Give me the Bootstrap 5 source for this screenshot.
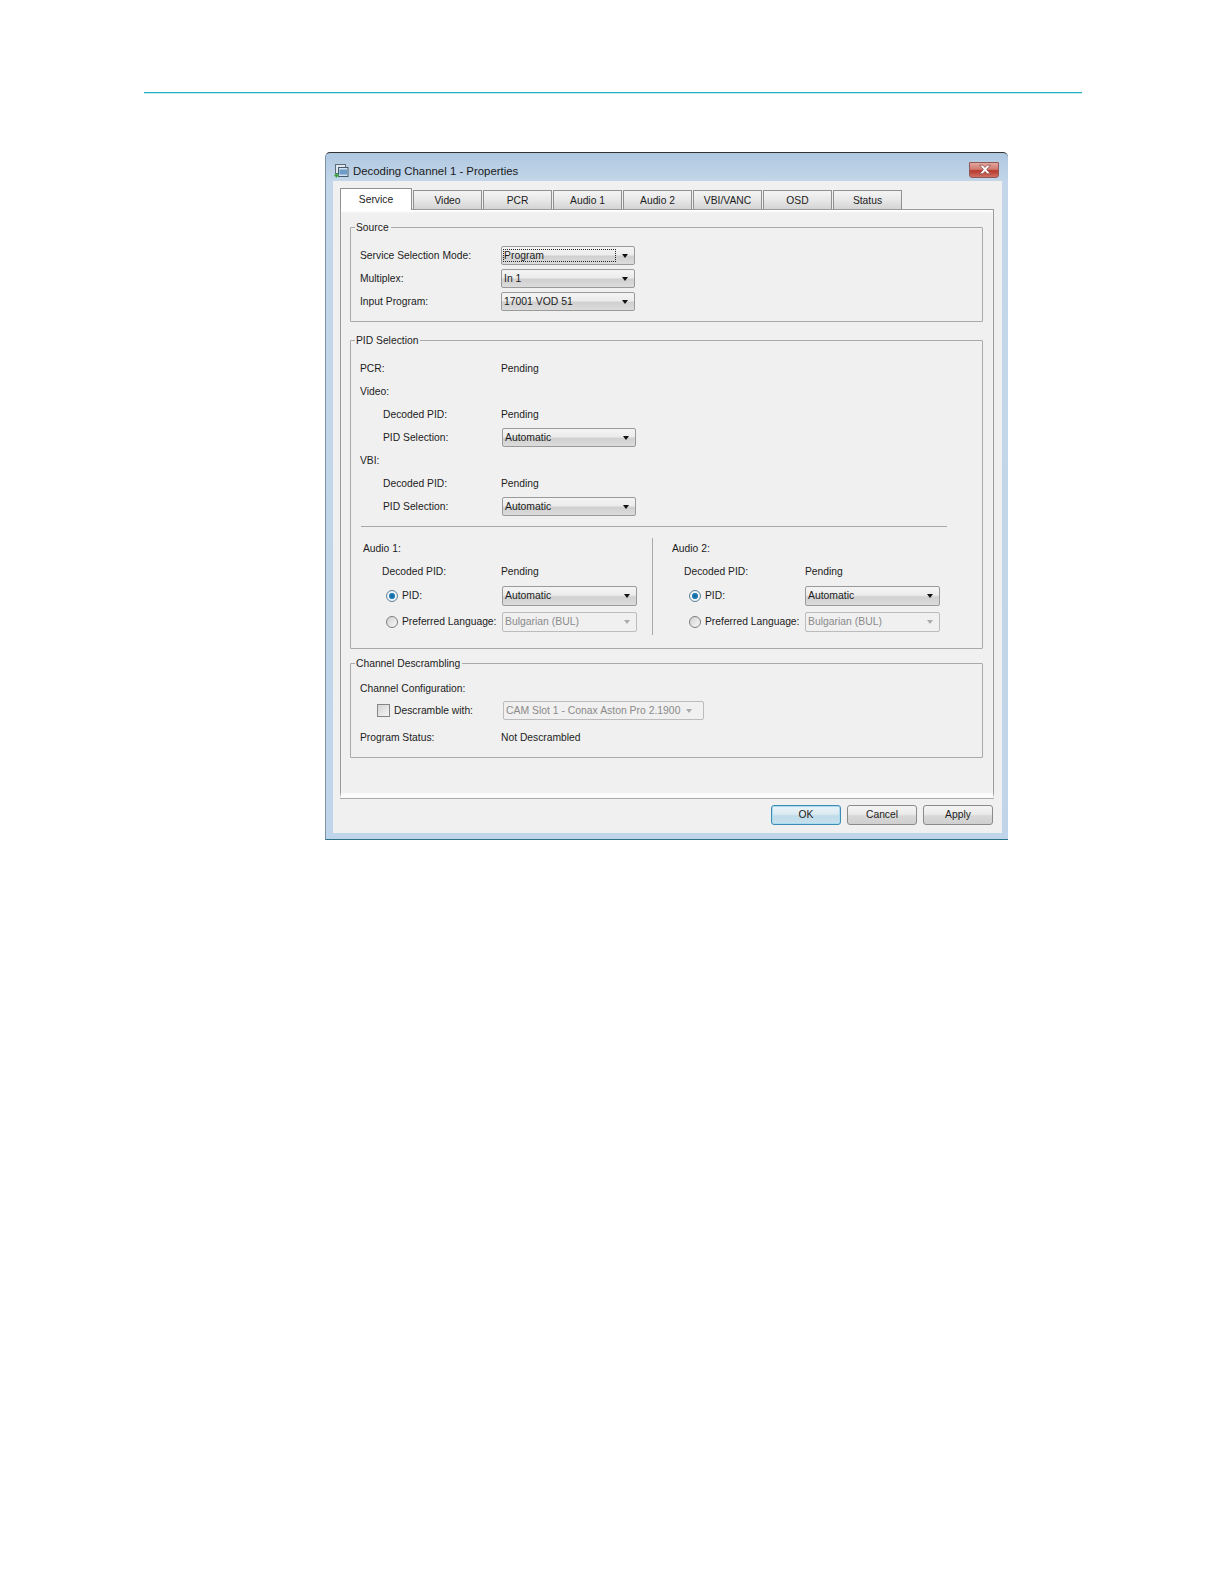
<!DOCTYPE html>
<html lang="en">
<head>
<meta charset="utf-8">
<title>Decoding Channel 1 - Properties</title>
<link href="https://cdn.jsdelivr.net/npm/bootstrap@5.3.0/dist/css/bootstrap.min.css" rel="stylesheet">
<style>
html,body{background:#fff;}
body{font-family:"Liberation Sans",sans-serif;font-size:10.3px;line-height:14px;color:#1c1c1c;min-height:1584px;}
.page-rule{margin:92px 142px 0 144px;height:1px;background:#22b0c0;box-shadow:0 1px 0 #c4ecf0;}
.dlg{margin:59px 0 0 325px;width:683px;height:688px;display:flex;flex-direction:column;padding:0 6px 6px 7px;border-radius:5px 5px 0 0;border-top:1px solid #333;border-left:1px solid #7b93a8;border-bottom:1px solid #2c7288;background:linear-gradient(180deg,#afc8e0 0,#c4d7ea 30px,#c0d5e9 100%);}
.dlg-title{height:28px;margin-left:-1px;padding-top:7px;font-size:11.4px;color:#1a1a1a;}
.dlg-title svg{margin-left:2px;}
.dlg-close{width:30px;height:16px;margin:0 3px 0 auto;position:relative;top:-1px;border:1px solid #8f5a55;border-radius:0 0 3px 3px;background:linear-gradient(180deg,#e2a59d 0,#d07b70 45%,#b8382c 55%,#cf7065 100%);}
.dlg-body{background:#f0f0f0;padding:7px 8px 8px 7px;}
.tabbar{border:0;flex-wrap:nowrap;align-items:flex-end;height:21px;}
.tabbar .nav-item{margin-right:1px;}
.tabbar .nav-link{width:69px;height:19px;padding:3px 0 0;font-size:10.3px;line-height:14px;text-align:center;color:#1c1c1c;border:1px solid #8f9090;border-bottom:0;border-radius:1px 1px 0 0;margin:0;background:linear-gradient(180deg,#f4f4f4 0,#e9e9e9 45%,#d4d4d4 100%);}
.tabbar .nav-link.active{width:72px;height:22px;margin-bottom:-1px;background:#fff;color:#1c1c1c;border-color:#8f9090;position:relative;z-index:1;padding-top:4px;}
.tabpanel{border:1px solid #9a9a9a;border-bottom:5px solid #fbfbfb;background:#f0f0f0;box-shadow:inset 0 2px 2px #fff;padding:10px 10px 0 9px;}
.grp{border:1px solid #a9a9a9;border-radius:1px;padding:0 9px;margin:0;min-width:0;}
.grp legend{float:none;width:auto;font-size:10.3px;line-height:14px;margin:0 0 -2px -5px;padding:2px 2px 0 1px;color:#1c1c1c;}
.grp-source legend{margin-bottom:-1px;padding-top:1px;}
.grp-source{margin-bottom:10px;padding-bottom:8px;}
.grp-source .ln-first{margin-top:10px;}
.grp-pid{margin-bottom:6px;padding-bottom:13px;}
.grp-pid .ln-first{margin-top:11px;}
.grp-chan{padding-bottom:8px;}
.grp-chan .ln-first{margin-top:8px;}
.ln{height:23px;}
.ln-tall{height:26px;}
.ln-mid{height:21px;margin-bottom:5px;}
.lbl{width:141px;flex:none;}
.lbl-in{width:118px;margin-left:23px;flex:none;}
.rule-h{height:1px;background:#a9a9a9;width:586px;margin:8px 0 10px 1px;}
.audio-cols{display:flex;}
.audio-a{width:293px;flex:none;border-right:1px solid #a9a9a9;padding-left:3px;margin-top:1px;}
.audio-a .ln-top{height:22px;padding-bottom:1px;}
.audio-b{flex:1;padding-left:19px;}
.w-dec{width:119px;flex:none;margin-left:19px;}
.w-dec-b{width:121px;flex:none;margin-left:12px;}
.radio-wrap{width:116px;flex:none;margin-left:23px;gap:4px;white-space:nowrap;}
.radio-wrap-b{margin-left:17px;}
.form-check-input.w7{width:12px;height:12px;margin:0;flex:none;background:linear-gradient(135deg,#d2d2d2,#f8f8f8);border:1px solid #7d7d7d;}
.form-check-input.w7:checked{background:radial-gradient(circle,#0f5f95 0,#2a86bf 40%,#f0f5f9 48%,#e9edf0 100%);border-color:#5f7f95;}
.chk-wrap{margin-left:17px;width:125px;flex:none;gap:4px;white-space:nowrap;}
.form-check-input.chk7{width:13px;height:13px;margin:0;border-radius:0;background:linear-gradient(135deg,#d4d4d4,#f5f5f5);border:1px solid #858585;flex:none;opacity:1;}
.cmb{width:134px;height:19px;flex:none;display:flex;align-items:center;justify-content:space-between;padding:0 6px 0 2px;border:1px solid #9a9a9a;border-radius:2px;background:linear-gradient(180deg,#f4f4f4 0,#ececec 45%,#d0d0d0 55%,#dcdcdc 100%);font-size:10.4px;color:#1c1c1c;}
.cmb-off{background:#f0f0f0;border-color:#bcbcbc;color:#8a8a8a;}
.cmb-aud{width:135px;height:20px;}
.cmb-wide{width:201px;margin-left:1px;padding-right:11px;}
.cmb-shift{margin-left:1px;}
.cmb-focus{width:113px;height:13px;margin-left:-1px;border:1px dotted #222;line-height:11px;}
.caret7{width:0;height:0;border-left:3.5px solid transparent;border-right:3.5px solid transparent;border-top:4px solid #111;}
.cmb-off .caret7{border-top-color:#aaa;}
.dlg-foot{border-top:1px solid #a9a9a9;padding:6px 1px 0 0;gap:6px;}
.btn.bt7{width:70px;height:20px;padding:0;font-size:10.3px;line-height:16px;color:#1c1c1c;border:1px solid #8a8a8a;border-radius:3px;background:linear-gradient(180deg,#f4f4f4 0,#ebebeb 45%,#d8d8d8 55%,#cfcfcf 100%);}
.btn.bt7-def{border-color:#3d8db3;background:linear-gradient(180deg,#e9f3f8 0,#dceaf2 45%,#bfdbe9 55%,#c8e0ec 100%);box-shadow:inset 0 0 0 1px #a9dcef;}
</style>
</head>
<body>
<div class="page-rule"></div>
<div class="dlg">
  <div class="dlg-title d-flex align-items-center gap-1">
    <svg width="15" height="15" viewBox="0 0 15 15" aria-hidden="true"><rect x="1.500" y="1.500" width="10" height="9" fill="#dfe8ef" stroke="#5b6b78"/><rect x="4.500" y="4.500" width="9.500" height="9" fill="#cfe0ee" stroke="#47586a"/><rect x="5.500" y="6.500" width="7.500" height="5" fill="#6d9cc9"/><path d="M0 12.500 3 10v1.500h2v2H3V15z" fill="#3aa53d"/></svg>
    <span>Decoding Channel 1 - Properties</span>
    <div class="dlg-close d-flex align-items-center justify-content-center"><svg width="14" height="11" viewBox="0 0 13 10" aria-hidden="true"><path d="M1.500 1h3l2 2.200L8.500 1h3L8 5l3.500 4h-3l-2-2.200L4.500 9h-3L5 5z" fill="#fff" stroke="#7a3a33" stroke-width=".6"/></svg></div>
  </div>
  <div class="dlg-body flex-grow-1 d-flex flex-column">
    <ul class="nav nav-tabs tabbar">
      <li class="nav-item"><a class="nav-link active" href="#">Service</a></li>
      <li class="nav-item"><a class="nav-link" href="#">Video</a></li>
      <li class="nav-item"><a class="nav-link" href="#">PCR</a></li>
      <li class="nav-item"><a class="nav-link" href="#">Audio 1</a></li>
      <li class="nav-item"><a class="nav-link" href="#">Audio 2</a></li>
      <li class="nav-item"><a class="nav-link" href="#">VBI/VANC</a></li>
      <li class="nav-item"><a class="nav-link" href="#">OSD</a></li>
      <li class="nav-item"><a class="nav-link" href="#">Status</a></li>
    </ul>
    <div class="tabpanel flex-grow-1">
      <fieldset class="grp grp-source">
        <legend>Source</legend>
        <div class="ln ln-first d-flex align-items-center"><span class="lbl">Service Selection Mode:</span><div class="cmb"><span class="cmb-focus">Program</span><i class="caret7"></i></div></div>
        <div class="ln d-flex align-items-center"><span class="lbl">Multiplex:</span><div class="cmb"><span>In 1</span><i class="caret7"></i></div></div>
        <div class="ln d-flex align-items-center"><span class="lbl">Input Program:</span><div class="cmb"><span>17001 VOD 51</span><i class="caret7"></i></div></div>
      </fieldset>
      <fieldset class="grp grp-pid">
        <legend>PID Selection</legend>
        <div class="ln ln-first d-flex align-items-center"><span class="lbl">PCR:</span><span>Pending</span></div>
        <div class="ln d-flex align-items-center"><span class="lbl">Video:</span></div>
        <div class="ln d-flex align-items-center"><span class="lbl-in">Decoded PID:</span><span>Pending</span></div>
        <div class="ln d-flex align-items-center"><span class="lbl-in">PID Selection:</span><div class="cmb cmb-shift"><span>Automatic</span><i class="caret7"></i></div></div>
        <div class="ln d-flex align-items-center"><span class="lbl">VBI:</span></div>
        <div class="ln d-flex align-items-center"><span class="lbl-in">Decoded PID:</span><span>Pending</span></div>
        <div class="ln d-flex align-items-center"><span class="lbl-in">PID Selection:</span><div class="cmb cmb-shift"><span>Automatic</span><i class="caret7"></i></div></div>
        <div class="rule-h"></div>
        <div class="audio-cols">
          <div class="audio-a">
            <div class="ln ln-top d-flex align-items-center">Audio 1:</div>
            <div class="ln d-flex align-items-center"><span class="w-dec">Decoded PID:</span><span>Pending</span></div>
            <div class="ln-tall d-flex align-items-center"><label class="radio-wrap d-flex align-items-center"><input class="form-check-input w7" type="radio" name="a1" checked>PID:</label><div class="cmb cmb-aud"><span>Automatic</span><i class="caret7"></i></div></div>
            <div class="ln-tall d-flex align-items-center"><label class="radio-wrap d-flex align-items-center"><input class="form-check-input w7" type="radio" name="a1">Preferred Language:</label><div class="cmb cmb-aud cmb-off"><span>Bulgarian (BUL)</span><i class="caret7"></i></div></div>
          </div>
          <div class="audio-b">
            <div class="ln d-flex align-items-center">Audio 2:</div>
            <div class="ln d-flex align-items-center"><span class="w-dec-b">Decoded PID:</span><span>Pending</span></div>
            <div class="ln-tall d-flex align-items-center"><label class="radio-wrap radio-wrap-b d-flex align-items-center"><input class="form-check-input w7" type="radio" name="a2" checked>PID:</label><div class="cmb cmb-aud"><span>Automatic</span><i class="caret7"></i></div></div>
            <div class="ln-tall d-flex align-items-center"><label class="radio-wrap radio-wrap-b d-flex align-items-center"><input class="form-check-input w7" type="radio" name="a2">Preferred Language:</label><div class="cmb cmb-aud cmb-off"><span>Bulgarian (BUL)</span><i class="caret7"></i></div></div>
          </div>
        </div>
      </fieldset>
      <fieldset class="grp grp-chan">
        <legend>Channel Descrambling</legend>
        <div class="ln ln-first d-flex align-items-center">Channel Configuration:</div>
        <div class="ln-mid d-flex align-items-center"><label class="chk-wrap d-flex align-items-center"><input class="form-check-input chk7" type="checkbox" disabled>Descramble with:</label><div class="cmb cmb-off cmb-wide"><span>CAM Slot 1 - Conax Aston Pro 2.1900</span><i class="caret7"></i></div></div>
        <div class="ln d-flex align-items-center"><span class="lbl">Program Status:</span><span>Not Descrambled</span></div>
      </fieldset>
    </div>
    <div class="dlg-foot d-flex justify-content-end">
      <button type="button" class="btn bt7 bt7-def">OK</button>
      <button type="button" class="btn bt7">Cancel</button>
      <button type="button" class="btn bt7">Apply</button>
    </div>
  </div>
</div>
<script src="https://cdn.jsdelivr.net/npm/bootstrap@5.3.0/dist/js/bootstrap.bundle.min.js"></script>
</body>
</html>
